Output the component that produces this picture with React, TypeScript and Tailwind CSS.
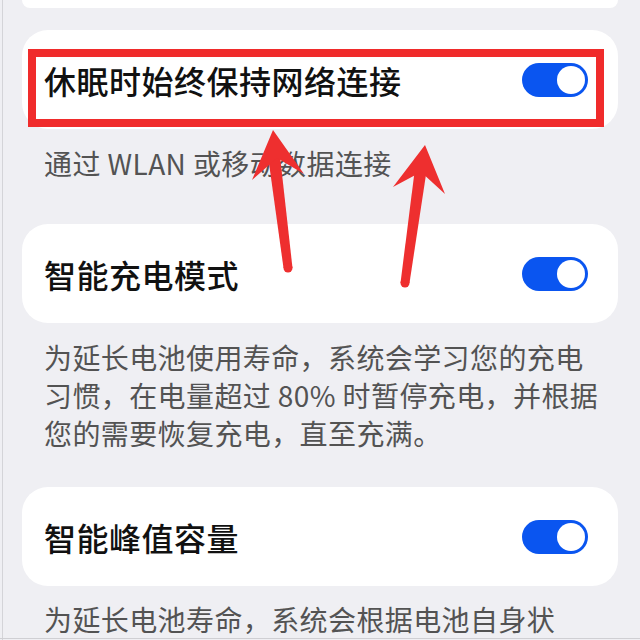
import React from "react";

const font = {
  fontFamily: '"Noto Sans CJK SC", "Noto Sans", sans-serif',
};

function Toggle() {
  return (
    <div className="w-[66px] h-[34px] rounded-full bg-[#0a55f0] flex items-center justify-end p-[3px] shrink-0">
      <div className="w-[28px] h-[28px] rounded-full bg-white" />
    </div>
  );
}

function Card({ title, className = "" }: { title: string; className?: string }) {
  return (
    <div
      className={`bg-white rounded-[26px] h-[99px] pl-[22px] pr-[30px] flex items-center justify-between ${className}`}
    >
      <span className="text-[32px] font-medium text-[#111111] leading-none tracking-[0.5px]">{title}</span>
      <Toggle />
    </div>
  );
}

function Caption({ lines, className = "" }: { lines: string[]; className?: string }) {
  return (
    <div className={`px-[22px] text-[28px] leading-[38px] tracking-[0.4px] text-[#535353] ${className}`}>
      {lines.map((l) => (
        <div key={l} className="whitespace-nowrap">
          {l}
        </div>
      ))}
    </div>
  );
}

export default function App() {
  return (
    <div
      className="relative w-[640px] h-[640px] overflow-hidden bg-[#efeff3] px-[22px]"
      style={font}
    >
      <div className="h-[8px] bg-white rounded-b-[26px]" />

      <Card title="休眠时始终保持网络连接" className="mt-[22px]" />
      <Caption lines={["通过 WLAN 或移动数据连接"]} className="mt-[15px] mb-[42px]" />

      <Card title="智能充电模式" />
      <Caption
        lines={[
          "为延长电池使用寿命，系统会学习您的充电",
          "习惯，在电量超过 80% 时暂停充电，并根据",
          "您的需要恢复充电，直至充满。",
        ]}
        className="mt-[15px] mb-[35px]"
      />

      <Card title="智能峰值容量" />
      <Caption lines={["为延长电池寿命，系统会根据电池自身状"]} className="mt-[14px]" />

      {/* screen edges */}
      <div className="absolute left-[2px] top-0 w-[1px] h-full bg-[#d4d4d8]" />
      <div className="absolute left-0 bottom-[1px] w-full h-[1px] bg-[#cfcfd3]" />

      {/* red annotation markup */}
      <svg
        className="absolute inset-0 pointer-events-none"
        width="640"
        height="640"
        viewBox="0 0 640 640"
      >
        <rect x="32" y="53" width="568" height="70" fill="none" stroke="#f02b2b" strokeWidth="8" />

        {/* left arrow */}
        <polygon points="283.5,268 292.5,268 280,156 268,156" fill="#ee2f2f" />
        <circle cx="288" cy="268" r="4.5" fill="#ee2f2f" />
        <polygon points="273,130 304,174 277,158 252,180" fill="#ee2f2f" />

        {/* right arrow */}
        <polygon points="400.5,283 409.5,283 427,168 415,168" fill="#ee2f2f" />
        <circle cx="405" cy="283" r="4.5" fill="#ee2f2f" />
        <polygon points="425,145 445,194 421,172 393,187" fill="#ee2f2f" />
      </svg>
    </div>
  );
}
